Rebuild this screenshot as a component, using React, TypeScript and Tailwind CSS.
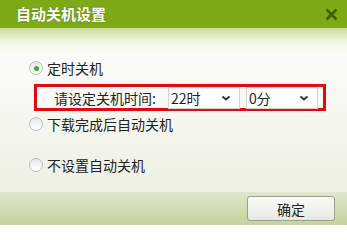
const font = { fontFamily: '"Noto Sans CJK SC", "Noto Sans", sans-serif' };

function Radio({ checked, label }: { checked?: boolean; label: string }) {
  return (
    <div className="flex h-[20px] items-center pl-[29px]">
      <span className="flex h-[14px] w-[14px] items-center justify-center rounded-full border border-[#b8bcc4] bg-[linear-gradient(#e6e9ed,#ffffff)]">
        {checked && <span className="h-[5px] w-[5px] rounded-full bg-[#3fae2a]" />}
      </span>
      <span className="ml-[4px] text-[14px] leading-[20px] text-[#222]">{label}</span>
    </div>
  );
}

function Select({ value }: { value: string }) {
  return (
    <div className="flex h-[22px] w-[72px] items-center justify-between border border-[#d4d4d4] bg-white pl-[2px] pr-[8px]">
      <span className="text-[14px] leading-[20px] text-[#222]">{value}</span>
      <svg width="10" height="7" viewBox="0 0 10 7" className="mt-[2px]">
        <path d="M1.5 1.5 L5 4.5 L8.5 1.5" fill="none" stroke="#333" strokeWidth="2" />
      </svg>
    </div>
  );
}

export default function App() {
  return (
    <div className="flex h-[225px] w-[347px] flex-col overflow-hidden" style={font}>
      <div className="flex h-[28px] shrink-0 items-center justify-between bg-[#7faa18] pl-[16px] pr-[9px]">
        <span className="text-[15px] font-bold leading-[20px] text-white [text-shadow:0_0_2px_rgba(60,90,0,0.6)]">
          自动关机设置
        </span>
        <svg width="13" height="13" viewBox="0 0 13 13">
          <path d="M1.5 1.5 L11.5 11.5 M11.5 1.5 L1.5 11.5" stroke="#3c5a0c" strokeWidth="2.6" />
        </svg>
      </div>
      <div className="flex flex-1 flex-col bg-[linear-gradient(#c9dc98_0px,#f6f9ee_16px,#fbfcf8_30px,#eef0e4_100%)]">
        <div className="mt-[30px]">
          <Radio checked label="定时关机" />
        </div>
        <div className="ml-[34px] mt-[6px] flex h-[27px] w-[292px] items-center border-[3px] border-[#e20a0a] bg-[#f9f9f7] pl-[17px]">
          <span className="w-[114px] text-[14px] leading-[20px] text-[#222]">请设定关机时间:</span>
          <Select value="22时" />
          <div className="ml-[6px]">
            <Select value="0分" />
          </div>
        </div>
        <div className="mt-[3px]">
          <Radio label="下载完成后自动关机" />
        </div>
        <div className="mt-[21px]">
          <Radio label="不设置自动关机" />
        </div>
      </div>
      <div className="flex h-[33px] shrink-0 items-center justify-end bg-[linear-gradient(#dfe7cc,#c3d39c)] pr-[12px]">
        <button className="flex h-[25px] w-[88px] items-center justify-center rounded-[3px] border border-[#9ea096] bg-[linear-gradient(#fbfbf8,#e6e8e0)] text-[14px] leading-[20px] text-[#222]">
          确定
        </button>
      </div>
    </div>
  );
}
